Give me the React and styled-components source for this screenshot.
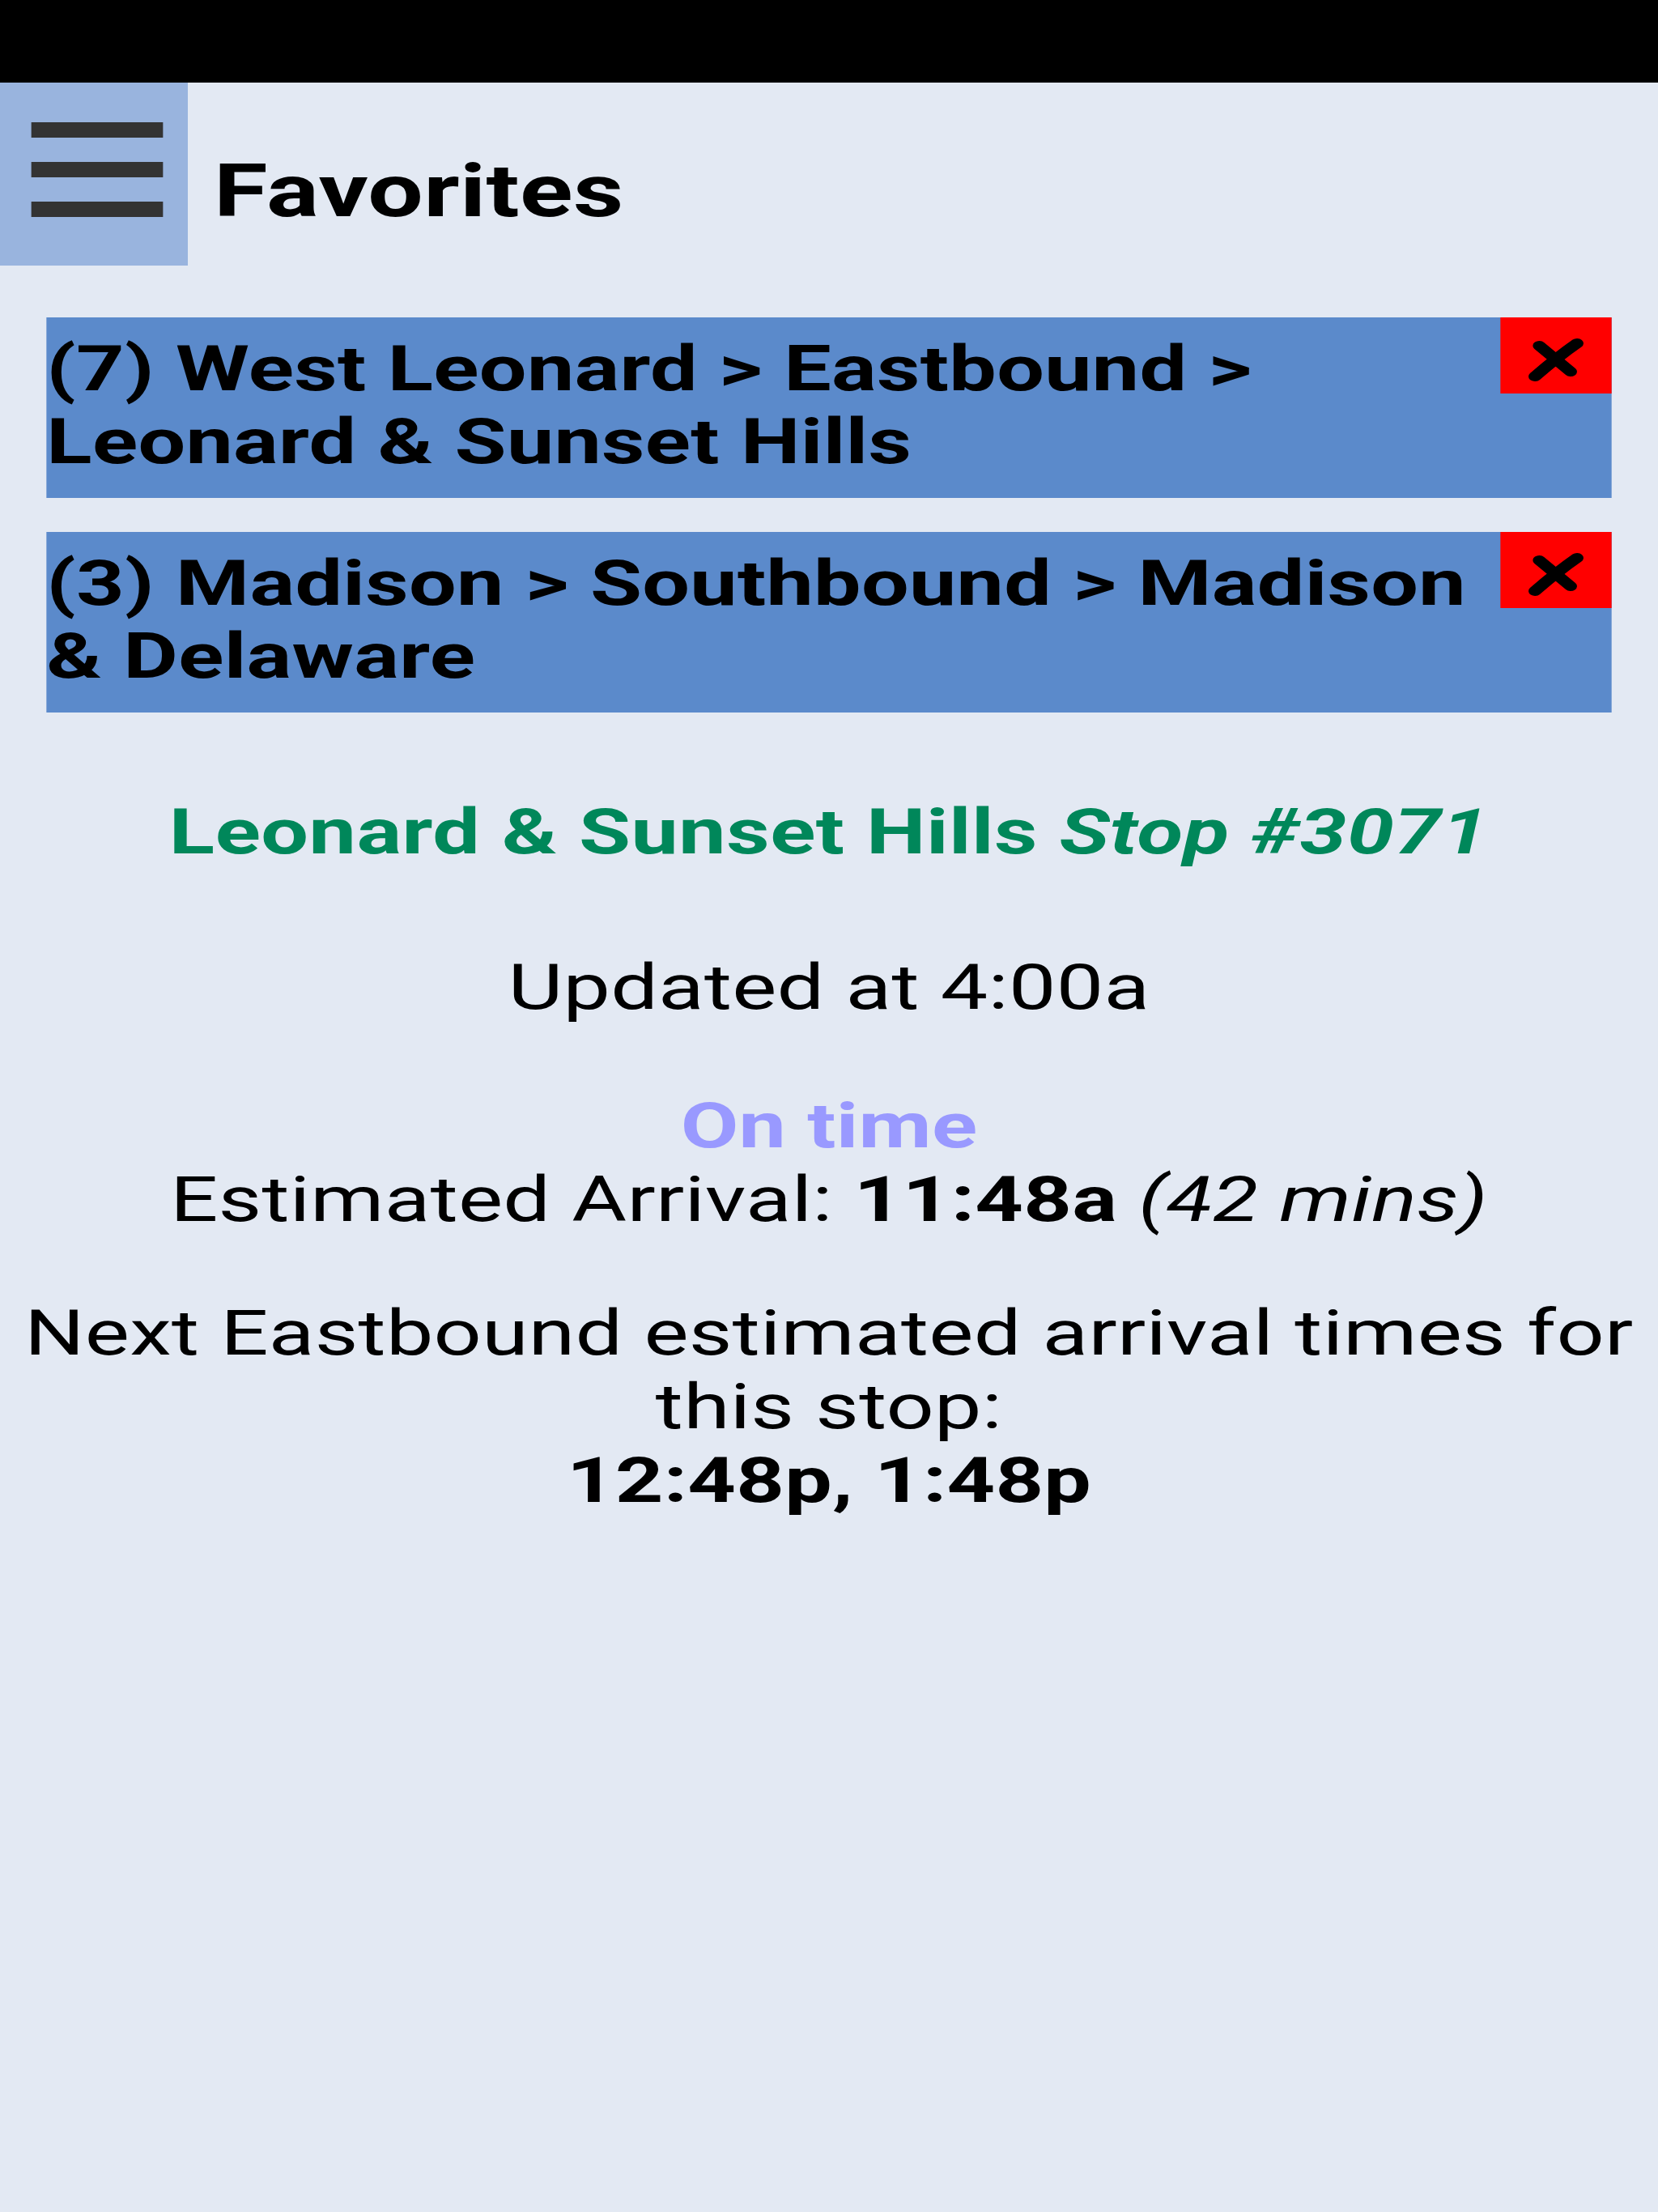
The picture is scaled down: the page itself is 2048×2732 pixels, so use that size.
import React from "react";
import styled, { createGlobalStyle } from "styled-components";

const GlobalStyle = createGlobalStyle`
html, body {
  margin: 0;
  padding: 0;
  background: #e3e9f3;
}
body {
  overflow-x: hidden;
  font-family: Roboto, "Liberation Sans", Arial, sans-serif;
  color: #000;
}
`;

// phone layout (1536 wide) stretched out to the tablet width
export const Screen = styled.div`
width: 1536px;
min-height: 2732px;
background: #e3e9f3;
transform: scaleX(1.33334);
transform-origin: 0 0;
`;

export const StatusBar = styled.div`
height: 102px;
background: #000;
`;

export const Header = styled.header`
display: flex;
flex-direction: row;
align-items: stretch;
height: 226px;
`;

export const MenuButton = styled.button`
display: flex;
flex-direction: column;
justify-content: center;
align-items: flex-start;
gap: 30px;
width: 174px;
padding: 0 0 12px 29px;
border: none;
background: #99b4de;
cursor: pointer;
`;

export const MenuBar = styled.span`
display: block;
width: 122px;
height: 19px;
background: #333;
`;

export const Title = styled.h1`
margin: 0 0 0 24px;
padding-top: 82px;
font-size: 91px;
line-height: 105px;
font-weight: 700;
letter-spacing: 0.3px;
`;

export const FavoriteList = styled.section`
display: flex;
flex-direction: column;
gap: 42px;
padding: 64px 43px 0 43px;
`;

export const FavoriteRow = styled.div`
display: flex;
flex-direction: row;
align-items: flex-start;
background: #5b8acb;
`;

export const FavoriteName = styled.div`
flex: 1;
padding: 19px 0 24px 0;
font-size: 78px;
line-height: 90px;
font-weight: 700;
letter-spacing: 0.25px;
`;

export const RemoveButton = styled.button`
flex: none;
width: 103px;
height: 94px;
padding: 0;
border: none;
background: #ff0000;
cursor: pointer;
svg {
  display: block;
}
`;

export const StopInfo = styled.section`
margin-top: 102px;
text-align: center;
font-size: 78px;
line-height: 91px;
letter-spacing: 0.2px;
`;

export const StopTitle = styled.div`
color: #00875a;
font-weight: 700;
letter-spacing: 0.4px;
em {
  font-style: italic;
}
`;

export const Line = styled.div`
margin-top: ${(props) => props.gap || 0}px;
`;

export const Status = styled.div`
margin-top: 80px;
color: #9999ff;
font-weight: 700;
`;

export const Bold = styled.b`
font-weight: 700;
`;

function CloseIcon() {
  return (
    <svg width="103" height="94" viewBox="0 0 103 94">
      <path d="M36 35 C45 45 55 56 65 67" stroke="#000" strokeWidth="12" strokeLinecap="round" fill="none" />
      <path d="M71 32 C58 44 45 58 32 73" stroke="#000" strokeWidth="12" strokeLinecap="round" fill="none" />
    </svg>
  );
}

const favorites = [
  "(7) West Leonard > Eastbound > Leonard & Sunset Hills",
  "(3) Madison > Southbound > Madison & Delaware",
];

function App() {
  return (
    <>
      <GlobalStyle />
      <Screen>
        <StatusBar />
        <Header>
          <MenuButton aria-label="menu">
            <MenuBar />
            <MenuBar />
            <MenuBar />
          </MenuButton>
          <Title>Favorites</Title>
        </Header>

        <FavoriteList>
          {favorites.map((name) => (
            <FavoriteRow key={name}>
              <FavoriteName>{name}</FavoriteName>
              <RemoveButton aria-label="remove">
                <CloseIcon />
              </RemoveButton>
            </FavoriteRow>
          ))}
        </FavoriteList>

        <StopInfo>
          <StopTitle>
            Leonard &amp; Sunset Hills <em>Stop #3071</em>
          </StopTitle>
          <Line gap={101}>Updated at 4:00a</Line>
          <Status>On time</Status>
          <Line>
            Estimated Arrival: <Bold>11:48a</Bold> <i>(42 mins)</i>
          </Line>
          <Line gap={74}>Next Eastbound estimated arrival times for this stop:</Line>
          <Line>
            <Bold>12:48p, 1:48p</Bold>
          </Line>
        </StopInfo>
      </Screen>
    </>
  );
}

export default App;
